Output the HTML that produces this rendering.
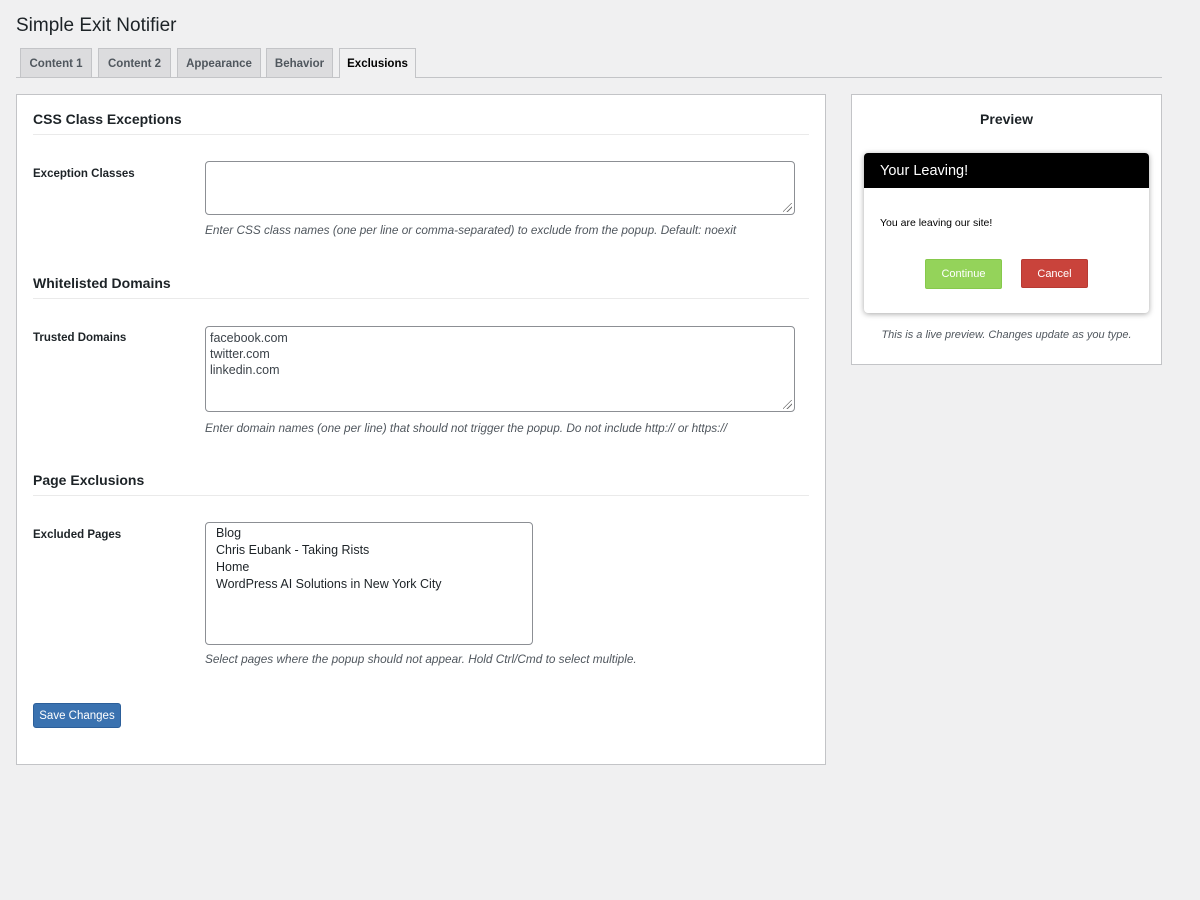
<!DOCTYPE html>
<html><head><meta charset="utf-8"><style>
*{box-sizing:border-box;margin:0;padding:0}
body{width:1200px;height:900px;background:#f0f0f1;font-family:"Liberation Sans",Arial,sans-serif;color:#1d2327;position:relative;overflow:hidden}
.a{position:absolute;white-space:nowrap}
.tab{position:absolute;top:48px;height:29px;background:#dcdcde;border:1px solid #c3c4c7;border-bottom:none;font-size:11.5px;font-weight:bold;color:#50575e;display:flex;align-items:center;justify-content:center;padding-top:2px}
.tab.act{background:#f0f0f1;color:#000;height:30px;padding-top:0}
.panel{position:absolute;background:#fff;border:1px solid #c3c4c7}
h2{position:absolute;font-size:14px;font-weight:bold;color:#1d2327}
.hr{position:absolute;left:33px;width:776px;height:1px;background:#eaeaea}
.lbl{position:absolute;left:33px;font-size:11.5px;font-weight:bold}
.ta{position:absolute;left:205px;border:1px solid #8c8f94;border-radius:4px;background:#fff}
.desc{position:absolute;left:205px;font-size:11.8px;font-style:italic;color:#50575e}
.ln{position:absolute;left:210px;font-size:12.5px;color:#3c434a}
.op{position:absolute;left:216px;font-size:12.5px;color:#1d2327}
.btn{position:absolute;display:flex;align-items:center;justify-content:center;color:#fff;font-size:11px}
.grip{position:absolute;right:2px;bottom:2px;width:9px;height:9px;background:linear-gradient(135deg,transparent 45%,#777 45%,#777 52%,transparent 52%,transparent 68%,#777 68%,#777 75%,transparent 75%)}
</style></head><body>
<div class="a" style="left:16px;top:15px;font-size:19px;color:#1d2327">Simple Exit Notifier</div>
<div class="a" style="left:16px;top:77px;width:1146px;height:1px;background:#c3c4c7"></div>
<div class="tab" style="left:20px;width:72px">Content 1</div>
<div class="tab" style="left:98px;width:73px">Content 2</div>
<div class="tab" style="left:177px;width:84px">Appearance</div>
<div class="tab" style="left:266px;width:67px">Behavior</div>
<div class="tab act" style="left:339px;width:77px">Exclusions</div>

<div class="panel" style="left:16px;top:94px;width:810px;height:671px"></div>
<h2 style="left:33px;top:111px">CSS Class Exceptions</h2>
<div class="hr" style="top:134px"></div>
<div class="lbl" style="top:168px">Exception Classes</div>
<div class="ta" style="top:161px;width:590px;height:54px"><div class="grip"></div></div>
<div class="desc" style="top:223px">Enter CSS class names (one per line or comma-separated) to exclude from the popup. Default: noexit</div>

<h2 style="left:33px;top:275px">Whitelisted Domains</h2>
<div class="hr" style="top:298px"></div>
<div class="lbl" style="top:332px">Trusted Domains</div>
<div class="ta" style="top:326px;width:590px;height:86px"><div class="grip"></div></div>
<div class="ln" style="top:331px">facebook.com</div>
<div class="ln" style="top:347px">twitter.com</div>
<div class="ln" style="top:363px">linkedin.com</div>
<div class="desc" style="top:421px">Enter domain names (one per line) that should not trigger the popup. Do not include http:// or https://</div>

<h2 style="left:33px;top:472px">Page Exclusions</h2>
<div class="hr" style="top:495px"></div>
<div class="lbl" style="top:529px">Excluded Pages</div>
<div class="ta" style="top:522px;width:328px;height:123px"></div>
<div class="op" style="top:526px">Blog</div>
<div class="op" style="top:543px">Chris Eubank - Taking Rists</div>
<div class="op" style="top:560px">Home</div>
<div class="op" style="top:577px">WordPress AI Solutions in New York City</div>
<div class="desc" style="top:652px">Select pages where the popup should not appear. Hold Ctrl/Cmd to select multiple.</div>
<div class="btn" style="left:33px;top:703px;width:88px;height:25px;background:#3a72b0;border:1px solid #2c5f9a;border-radius:3px;font-size:11.5px">Save Changes</div>

<div class="panel" style="left:851px;top:94px;width:311px;height:271px"></div>
<div class="a" style="left:851px;width:311px;top:111px;text-align:center;font-size:14px;font-weight:bold">Preview</div>
<div class="a" style="left:864px;top:153px;width:285px;height:160px;background:#fff;border-radius:4px;box-shadow:0 1px 6px rgba(0,0,0,.35);overflow:hidden">
<div style="height:35px;background:#000;color:#fff;font-size:14.5px;line-height:37px;padding-left:16px">Your Leaving!</div>
<div class="a" style="left:16px;top:64px;font-size:10.5px;color:#000">You are leaving our site!</div>
<div class="btn" style="left:61px;top:106px;width:77px;height:30px;background:#94d35a;border:1px solid #86c94c;border-radius:2px">Continue</div>
<div class="btn" style="left:157px;top:106px;width:67px;height:29px;background:#c9433b;border:1px solid #b73a33;border-radius:2px">Cancel</div>
</div>
<div class="a" style="left:851px;width:311px;top:329px;text-align:center;font-size:11px;font-style:italic;color:#50575e">This is a live preview. Changes update as you type.</div>
</body></html>
